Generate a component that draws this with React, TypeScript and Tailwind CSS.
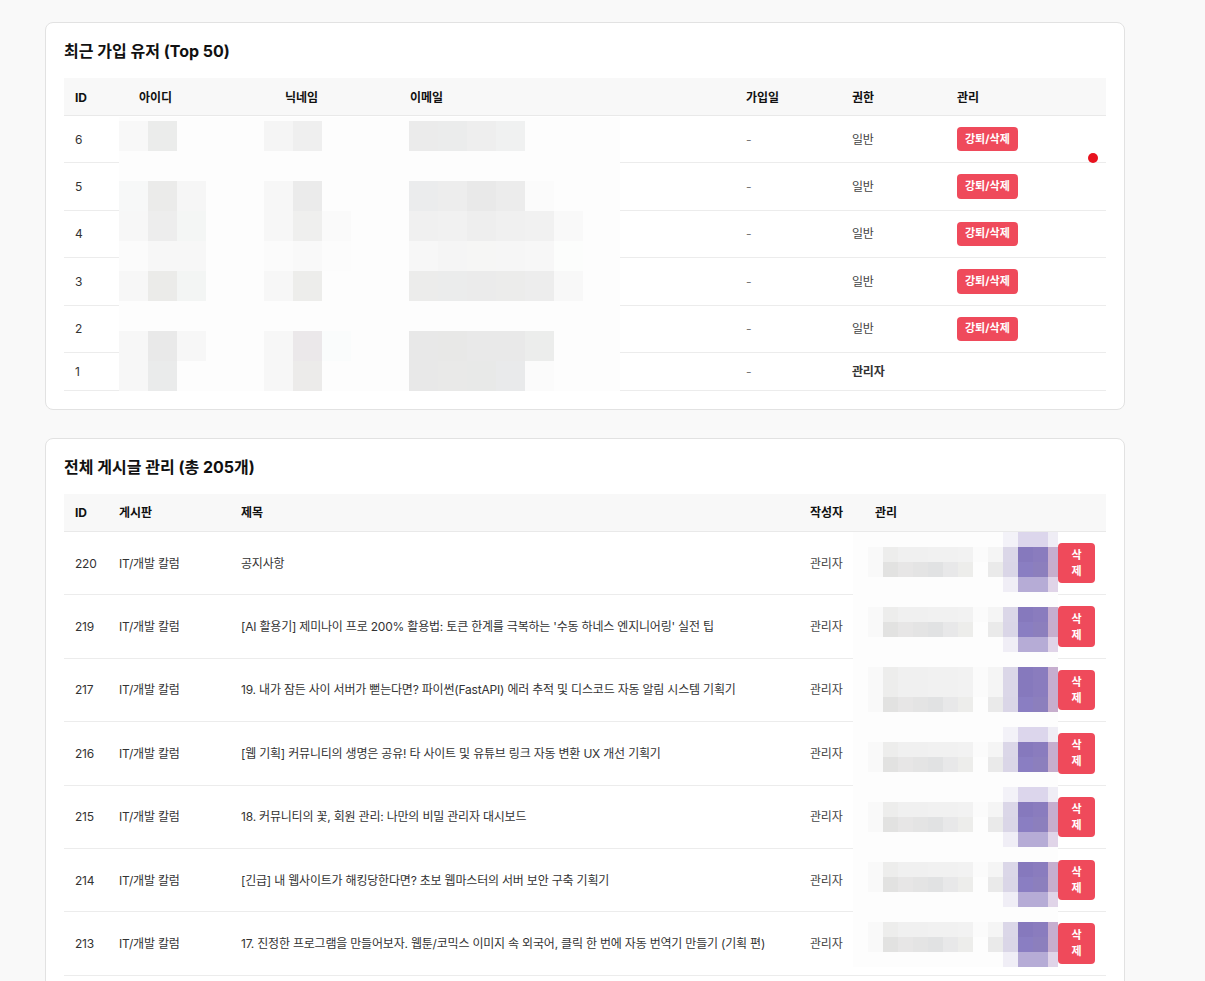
import type { ReactNode } from "react";

type User = { id: number; joined: string; role: string; admin?: boolean };
type Post = { id: number; board: string; title: string; author: string };

const USERS: User[] = [
  { id: 6, joined: "-", role: "일반" },
  { id: 5, joined: "-", role: "일반" },
  { id: 4, joined: "-", role: "일반" },
  { id: 3, joined: "-", role: "일반" },
  { id: 2, joined: "-", role: "일반" },
  { id: 1, joined: "-", role: "관리자", admin: true },
];

const POSTS: Post[] = [
  { id: 220, board: "IT/개발 칼럼", title: "공지사항", author: "관리자" },
  { id: 219, board: "IT/개발 칼럼", title: "[AI 활용기] 제미나이 프로 200% 활용법: 토큰 한계를 극복하는 '수동 하네스 엔지니어링' 실전 팁", author: "관리자" },
  { id: 217, board: "IT/개발 칼럼", title: "19. 내가 잠든 사이 서버가 뻗는다면? 파이썬(FastAPI) 에러 추적 및 디스코드 자동 알림 시스템 기획기", author: "관리자" },
  { id: 216, board: "IT/개발 칼럼", title: "[웹 기획] 커뮤니티의 생명은 공유! 타 사이트 및 유튜브 링크 자동 변환 UX 개선 기획기", author: "관리자" },
  { id: 215, board: "IT/개발 칼럼", title: "18. 커뮤니티의 꽃, 회원 관리: 나만의 비밀 관리자 대시보드", author: "관리자" },
  { id: 214, board: "IT/개발 칼럼", title: "[긴급] 내 웹사이트가 해킹당한다면? 초보 웹마스터의 서버 보안 구축 기획기", author: "관리자" },
  { id: 213, board: "IT/개발 칼럼", title: "17. 진정한 프로그램을 만들어보자. 웹툰/코믹스 이미지 속 외국어, 클릭 한 번에 자동 번역기 만들기 (기획 편)", author: "관리자" },
];

// 개인정보 가림 처리 (모자이크) - 유저 테이블
const USER_MOSAIC: Record<number, string>[] = [
  { 0: "#f8f8f8", 1: "#ebeceb", 5: "#f5f5f5", 6: "#efefef", 10: "#ebebeb", 11: "#ebecec", 12: "#eeeeee", 13: "#f0f1f1" },
  {},
  { 0: "#f7f8f8", 1: "#ebebea", 2: "#f6f6f6", 5: "#f7f7f7", 6: "#ebebeb", 10: "#ebeced", 11: "#ededed", 12: "#e9e9e9", 13: "#ececec", 14: "#fbfbfb" },
  { 0: "#f7f7f7", 1: "#ededed", 2: "#f4f6f5", 5: "#f7f7f7", 6: "#efefee", 7: "#fafafa", 10: "#f0f0f0", 11: "#f1f1f1", 12: "#eeeeee", 13: "#f0f0f0", 14: "#f1f1f1", 15: "#f9f9f9" },
  { 0: "#fbfbfb", 1: "#f7f7f7", 2: "#f7f7f7", 5: "#fbfbfb", 6: "#f9f9f9", 7: "#fcfcfc", 10: "#f7f7f7", 11: "#f5f5f5", 12: "#f6f6f5", 13: "#f6f6f6", 14: "#f7f7f7", 15: "#fcfdfc" },
  { 0: "#f7f7f7", 1: "#ebebe9", 2: "#f3f5f4", 5: "#f7f7f7", 6: "#ededeb", 10: "#ececeb", 11: "#ebecec", 12: "#ebebeb", 13: "#ececeb", 14: "#ededed", 15: "#f8f8f8" },
  {},
  { 0: "#f7f7f7", 1: "#e9e9e9", 2: "#f7f7f7", 5: "#f7f7f7", 6: "#ebe8ea", 7: "#fafcfc", 10: "#e8e8e8", 11: "#e8e8e7", 12: "#e9e9e9", 13: "#e9e9e9", 14: "#ecedec" },
  { 0: "#f7f7f7", 1: "#eaebeb", 5: "#f7f7f7", 6: "#ecebea", 10: "#e8e8e8", 11: "#e9e9e8", 12: "#e8e9e8", 13: "#e9eaeb", 14: "#fbfbfb" },
];

// 게시글 테이블 관리 칸 모자이크: 행 중앙 기준으로 패턴 선택
const POST_PATTERNS: Record<string, Record<number, string>> = {
  top: { 10: "#f3f2f8", 11: "#dcd6ec", 12: "#dcd6ec", 13: "#efedf5" },
  a: { 1: "#f9f9f9", 2: "#ededec", 3: "#f0f0f0", 4: "#f0f0f0", 5: "#f1f1f1", 6: "#f1f1f1", 7: "#f2f2f2", 8: "#fbfbfb", 9: "#f5f5f5", 10: "#dbd7e8", 11: "#8679bd", 12: "#8a7cbe", 13: "#c6aecf" },
  b: { 1: "#f9f9f9", 2: "#e2e2e1", 3: "#e7e6e6", 4: "#e4e4e4", 5: "#e1e2e3", 6: "#e8e8e9", 7: "#ededeb", 8: "#fdfdfd", 9: "#eaeaea", 10: "#dad6e7", 11: "#8a7ec2", 12: "#8c7fbd", 13: "#c7aecd" },
  bottom: { 10: "#f0eef6", 11: "#b6acd6", 12: "#b6acd6", 13: "#e0d4e8" },
  none: {},
};

const ROW_CENTERS = [31.5, 94.5, 158, 221.5, 285, 349, 412.5];

const postMosaicRow = (r: number) => {
  const mid = r * 15 + 7.5;
  let d = 999;
  ROW_CENTERS.forEach((c) => {
    if (Math.abs(mid - c) < Math.abs(d)) d = mid - c;
  });
  if (d >= -25 && d < -16) return POST_PATTERNS.top;
  if (d >= -16 && d < 0) return POST_PATTERNS.a;
  if (d >= 0 && d < 15) return POST_PATTERNS.b;
  if (d >= 15 && d <= 25) return POST_PATTERNS.bottom;
  return POST_PATTERNS.none;
};

const Mosaic = ({ rows, cols, cw, ch, colorAt }: { rows: number; cols: number; cw: number; ch: number; colorAt: (r: number, c: number) => string | undefined }) => (
  <div className="flex flex-col">
    {Array.from({ length: rows }).map((_, r) => (
      <div key={r} className="flex">
        {Array.from({ length: cols }).map((_, c) => (
          <div key={c} className="shrink-0" style={{ width: cw, height: ch, backgroundColor: colorAt(r, c) }} />
        ))}
      </div>
    ))}
  </div>
);

const Card = ({ title, children }: { title: string; children: ReactNode }) => (
  <section className="relative bg-white border border-[#e2e2e2] rounded-[8px] p-[18px]">
    <h2 className="text-[16px] leading-[20px] font-bold text-[#111] mb-[17px]">{title}</h2>
    {children}
  </section>
);

const th = "text-left px-[11px] pt-[11.5px] pb-[10.5px] leading-[15px] text-[12px] font-bold text-[#111] bg-[#f8f8f8] border-b border-[#e9e9e9]";
const td = "px-[11px] py-[11px] text-[12px] leading-[15px] tracking-[-0.2px] text-[#333] border-b border-[#ececec] align-middle whitespace-nowrap";

const App = () => {
  return (
    <div className="min-h-screen bg-[#f9f9f9] pl-[45px] pt-[22px] pb-10 font-['Inter','Noto_Sans_CJK_KR',sans-serif]">
      <div className="w-[1080px] flex flex-col gap-[28px]">
        {/* 최근 가입 유저 */}
        <Card title="최근 가입 유저 (Top 50)">
          <div className="relative">
            <table className="w-full table-fixed border-collapse">
              <colgroup>
                <col className="w-[64px]" />
                <col className="w-[146px]" />
                <col className="w-[125px]" />
                <col className="w-[336px]" />
                <col className="w-[106px]" />
                <col className="w-[105px]" />
                <col className="w-[160px]" />
              </colgroup>
              <thead>
                <tr>
                  <th className={th}>ID</th>
                  <th className={th}>아이디</th>
                  <th className={th}>닉네임</th>
                  <th className={th}>이메일</th>
                  <th className={th}>가입일</th>
                  <th className={th}>권한</th>
                  <th className={th}>관리</th>
                </tr>
              </thead>
              <tbody>
                {USERS.map((u) => (
                  <tr key={u.id} className={u.admin ? "h-[37px]" : "h-[47.4px]"}>
                    <td className={td}>{u.id}</td>
                    <td className={td}></td>
                    <td className={td}></td>
                    <td className={td}></td>
                    <td className={`${td} text-[#777]`}>{u.joined}</td>
                    <td className={`${td} ${u.admin ? "font-bold text-[#111]" : "text-[#444]"}`}>{u.role}</td>
                    <td className={td}>
                      {!u.admin && (
                        <button className="flex items-center h-[24.4px] px-[8px] rounded-[4px] bg-[#ef4a5b] text-white text-[11px] font-bold leading-none tracking-normal">
                          강퇴/삭제
                        </button>
                      )}
                    </td>
                  </tr>
                ))}
              </tbody>
            </table>
            <div className="absolute left-[55px] top-[39px] w-[501px] h-[274px] bg-[#fdfdfd] pt-[4px] overflow-hidden">
              <Mosaic rows={9} cols={18} cw={29} ch={30} colorAt={(r, c) => USER_MOSAIC[r]?.[c]} />
            </div>
          </div>
          <span className="absolute left-[1042px] top-[130px] w-[10px] h-[10px] rounded-full bg-[#e8121e]" />
        </Card>

        {/* 전체 게시글 관리 */}
        <Card title="전체 게시글 관리 (총 205개)">
          <div className="relative">
            <table className="w-full table-fixed border-collapse">
              <colgroup>
                <col className="w-[44px]" />
                <col className="w-[122px]" />
                <col className="w-[569px]" />
                <col className="w-[65px]" />
                <col className="w-[242px]" />
              </colgroup>
              <thead>
                <tr>
                  <th className={th}>ID</th>
                  <th className={th}>게시판</th>
                  <th className={th}>제목</th>
                  <th className={th}>작성자</th>
                  <th className={th}>관리</th>
                </tr>
              </thead>
              <tbody>
                {POSTS.map((p) => (
                  <tr key={p.id} className="h-[63.4px]">
                    <td className={`${td} text-[#222]`}>{p.id}</td>
                    <td className={td}>{p.board}</td>
                    <td className={td}>{p.title}</td>
                    <td className={`${td} text-[#444]`}>{p.author}</td>
                    <td className={td}>
                      <div className="flex justify-end">
                        <button className="flex items-center justify-center w-[37px] h-[40.4px] px-[12px] rounded-[4px] bg-[#ef4a5b] text-white text-[11px] font-bold leading-[16px] tracking-normal text-center break-all whitespace-normal">
                          삭제
                        </button>
                      </div>
                    </td>
                  </tr>
                ))}
              </tbody>
            </table>
            <div className="absolute left-[789px] top-[38px] w-[205px] h-[435px] bg-[#fdfdfd] overflow-hidden">
              <Mosaic rows={29} cols={14} cw={15} ch={15} colorAt={(r, c) => postMosaicRow(r)[c]} />
            </div>
          </div>
        </Card>
      </div>
    </div>
  );
};

export default App;
